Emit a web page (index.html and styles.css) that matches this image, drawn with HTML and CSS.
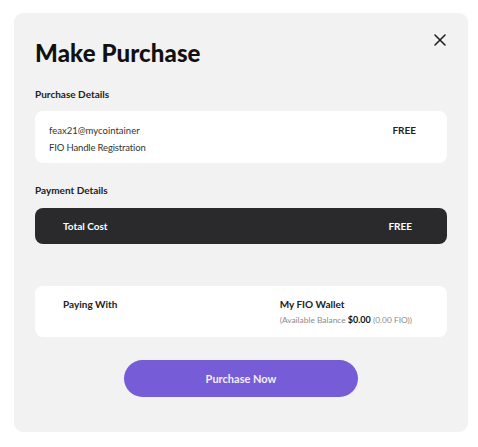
FILE: index.html
```html
<!DOCTYPE html>
<html>
<head>
<meta charset="utf-8">
<link rel="stylesheet" href="styles.css">
</head>
<body>
<div class="modal">
  <div class="header">
    <h1 class="title">Make Purchase</h1>
    <button class="close" aria-label="Close">
      <svg width="12" height="12" viewBox="0 0 12 12"><path d="M1 1L11 11M11 1L1 11" stroke="#1a1a1a" stroke-width="1.5" stroke-linecap="round"/></svg>
    </button>
  </div>
  <div class="label first">Purchase Details</div>
  <div class="card item">
    <div class="item-main">
      <div class="item-name">feax21@mycointainer</div>
      <div class="item-sub">FIO Handle Registration</div>
    </div>
    <div class="item-price">FREE</div>
  </div>
  <div class="label">Payment Details</div>
  <div class="total">
    <span>Total Cost</span>
    <span>FREE</span>
  </div>
  <div class="card paying">
    <div class="paying-label">Paying With</div>
    <div class="wallet">
      <div class="wallet-name">My FIO Wallet</div>
      <div class="wallet-balance">(Available Balance <b>$0.00</b> (0.00 FIO))</div>
    </div>
  </div>
  <div class="actions">
    <button class="primary">Purchase Now</button>
  </div>
</div>
</body>
</html>
```
FILE: styles.css
```css
* { box-sizing: border-box; }
body {
  margin: 0;
  background: #ffffff;
  font-family: "Lato", "Liberation Sans", sans-serif;
  color: #1f1f1f;
}
.modal {
  margin: 13px 0 0 14px;
  width: 454px;
  height: 419px;
  background: #f2f2f2;
  border-radius: 9px;
  padding: 0 21px;
  display: flex;
  flex-direction: column;
}
.header {
  display: flex;
  justify-content: space-between;
  align-items: flex-start;
  padding-top: 26px;
}
.title {
  margin: 0;
  font-size: 24px;
  line-height: 28px;
  font-weight: 900;
  color: #111;
  letter-spacing: 0.1px;
}
.close {
  border: 0;
  background: none;
  padding: 0;
  margin: -5px 1px 0 0;
  width: 12px;
  height: 12px;
  display: flex;
}
.label {
  font-size: 10px;
  font-weight: 700;
  line-height: 14px;
  color: #222;
  margin-top: 20px;
  margin-bottom: 10px;
}
.label.first { margin-top: 20px; }
.card {
  background: #ffffff;
  border-radius: 8px;
}
.item {
  height: 52px;
  display: flex;
  justify-content: space-between;
  padding: 11px 31px 0 14px;
}
.item-name, .item-sub {
  font-size: 9.5px;
  line-height: 17px;
  color: #333;
}
.item-sub { letter-spacing: -0.15px; }
.item-price {
  font-size: 10px;
  font-weight: 700;
  line-height: 17px;
  color: #222;
}
.total {
  margin-top: 1px;
  height: 36px;
  background: #2a2a2d;
  border-radius: 8px;
  display: flex;
  justify-content: space-between;
  align-items: center;
  padding: 0 35px 0 28px;
  color: #fff;
  font-size: 10px;
  font-weight: 700;
}
.paying {
  margin-top: 42px;
  height: 51px;
  display: flex;
  justify-content: space-between;
  padding: 11px 35px 0 28px;
}
.paying-label, .wallet-name {
  font-size: 10px;
  font-weight: 700;
  line-height: 15px;
  color: #222;
}
.wallet-balance {
  font-size: 8.4px;
  line-height: 16px;
  color: #8c8c8c;
  font-weight: 400;
}
.wallet-balance b { color: #111; font-size: 9px; font-weight: 700; }
.actions {
  display: flex;
  justify-content: center;
  margin-top: 23px;
}
.primary {
  width: 234px;
  height: 37px;
  border: 0;
  border-radius: 19px;
  background: #765cd6;
  color: #f2f0fb;
  font-family: inherit;
  font-size: 11px;
  font-weight: 700;
}
```
